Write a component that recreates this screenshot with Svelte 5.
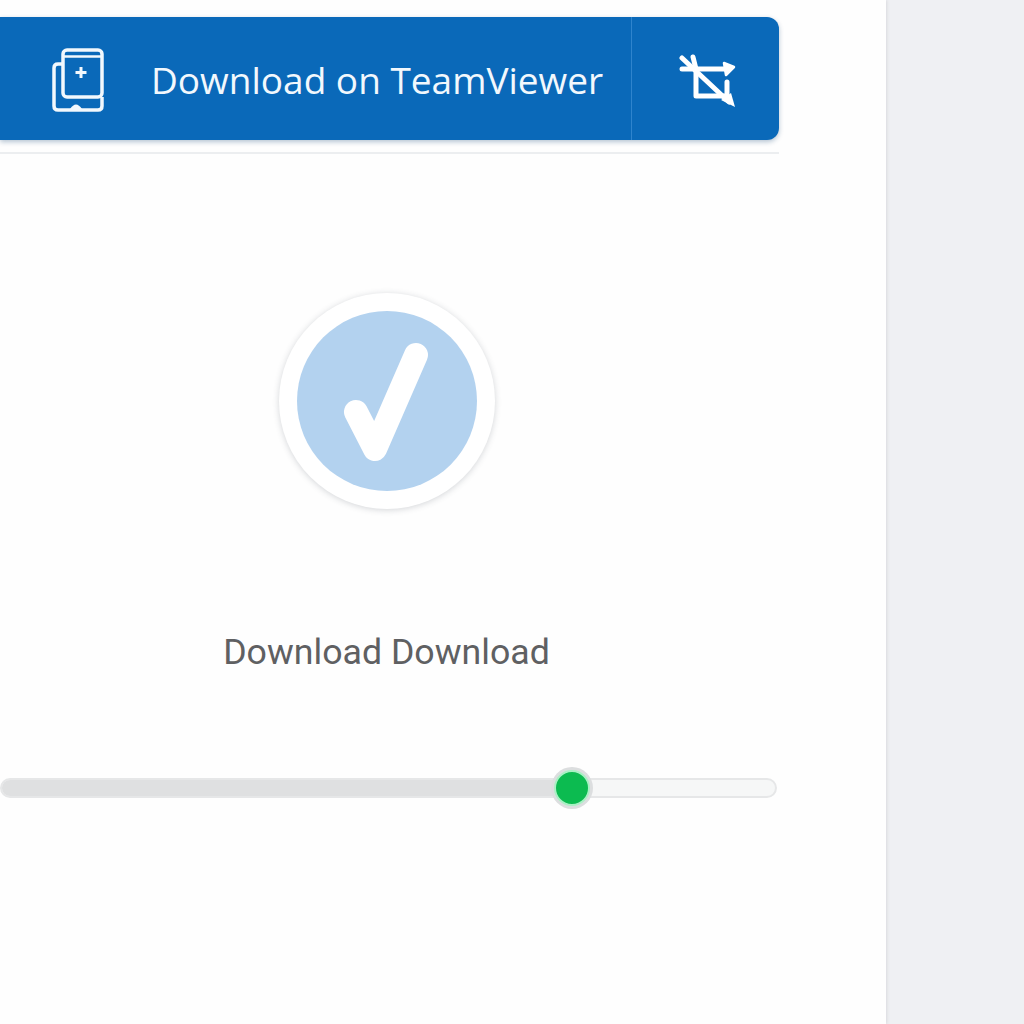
<script>
  let progress = 73.5;
</script>

<main class="panel">
  <div class="column">
    <div class="banner">
      <div class="banner-main">
        <svg class="tablet" width="52" height="64" viewBox="0 0 52 64" fill="none" stroke="currentColor" stroke-width="3.500">
          <path d="M11 16H6Q2 16 2 20V58Q2 62 6 62H46Q50 62 50 58V49" />
          <rect x="11" y="2" width="39" height="47" rx="4" />
          <path d="M12 8.500H49" stroke-width="2.500" />
          <path d="M29 19V30M23.500 24.500H34.500" stroke-width="3" />
          <path d="M18 61Q24 52 30 61Z" fill="currentColor" stroke="none" />
        </svg>
        <span class="banner-label">Download on TeamViewer</span>
      </div>
      <div class="banner-action">
        <svg width="58" height="54" viewBox="0 0 58 54" fill="none" stroke="currentColor" stroke-width="5" stroke-linecap="round" stroke-linejoin="round">
          <path d="M3 15H46" />
          <path d="M17 15V42H48V28" />
          <path d="M3 4L50 48" />
          <path d="M14 3L17 15" />
          <path d="M45 9L55 13L47 21Z" fill="currentColor" stroke-width="2.500" />
          <path d="M42 46L56 53L52 39Z" fill="currentColor" stroke="none" />
        </svg>
      </div>
    </div>
    <div class="rule"></div>

    <div class="status">
      <div class="badge">
        <div class="badge-fill">
          <svg width="180" height="180" viewBox="0 0 180 180" fill="none">
            <path d="M59 101L78 138L119 44" stroke="#fff" stroke-width="24" stroke-linecap="round" stroke-linejoin="round" />
          </svg>
        </div>
      </div>
      <p class="caption">Download Download</p>
    </div>

    <div class="slider">
      <div class="slider-fill" style="width: {progress}%"></div>
      <div class="slider-thumb"></div>
    </div>
  </div>
</main>

<style>
  :global(body) {
    margin: 0;
    background: #eff0f3;
  }

  .panel {
    width: 886px;
    height: 1024px;
    background: #fefefe;
    box-shadow: 1px 0 3px #d8d9dd;
    padding-top: 17px;
    box-sizing: border-box;
    font-family: Roboto, "Liberation Sans", sans-serif;
  }

  .column {
    width: 779px;
  }

  .banner {
    height: 123px;
    display: flex;
    background: #0a69b9;
    border-radius: 0 12px 12px 0;
    box-shadow: 0 2px 5px rgba(10, 60, 110, 0.3);
    color: #f2f8fd;
  }

  .banner-main {
    width: 632px;
    display: flex;
    align-items: center;
    gap: 47px;
    padding-left: 52px;
    padding-top: 2px;
    box-sizing: border-box;
    border-right: 1px solid #2f84cd;
  }

  .tablet {
    flex: none;
  }

  .banner-label {
    font-family: "Open Sans", "Liberation Sans", sans-serif;
    font-size: 37px;
    line-height: 1;
    white-space: nowrap;
  }

  .banner-action {
    flex: 1;
    display: flex;
    align-items: center;
    justify-content: center;
    color: #fff;
    padding: 4px 0 0 4px;
  }

  .rule {
    height: 2px;
    margin-top: 12px;
    background: #eceef0;
  }

  .status {
    display: flex;
    flex-direction: column;
    align-items: center;
    margin-top: 139px;
    padding-right: 6px;
  }

  .badge {
    width: 216px;
    height: 216px;
    box-sizing: border-box;
    padding: 18px;
    border-radius: 50%;
    background: #fff;
    box-shadow: 0 1px 6px rgba(60, 70, 80, 0.22);
  }

  .badge-fill {
    width: 180px;
    height: 180px;
    border-radius: 50%;
    background: #b3d2ef;
  }

  .badge-fill svg {
    display: block;
  }

  .caption {
    margin: 123px 0 0;
    font-size: 35.700px;
    line-height: 40px;
    color: #5f6062;
    white-space: nowrap;
  }

  .slider {
    position: relative;
    width: 777px;
    height: 20px;
    margin-top: 106px;
    box-sizing: border-box;
    background: #f6f7f7;
    border: 2px solid #e6e7e8;
    border-radius: 10px;
  }

  .slider-fill {
    height: 100%;
    background: #dfe0e1;
    border-radius: 8px 0 0 8px;
  }

  .slider-thumb {
    position: absolute;
    left: 552px;
    top: -10px;
    width: 36px;
    height: 36px;
    border-radius: 50%;
    background: #0cbb50;
    border: 2px solid #a9f0c4;
    box-shadow: 0 0 0 3px #dcdedf;
    box-sizing: border-box;
  }
</style>
